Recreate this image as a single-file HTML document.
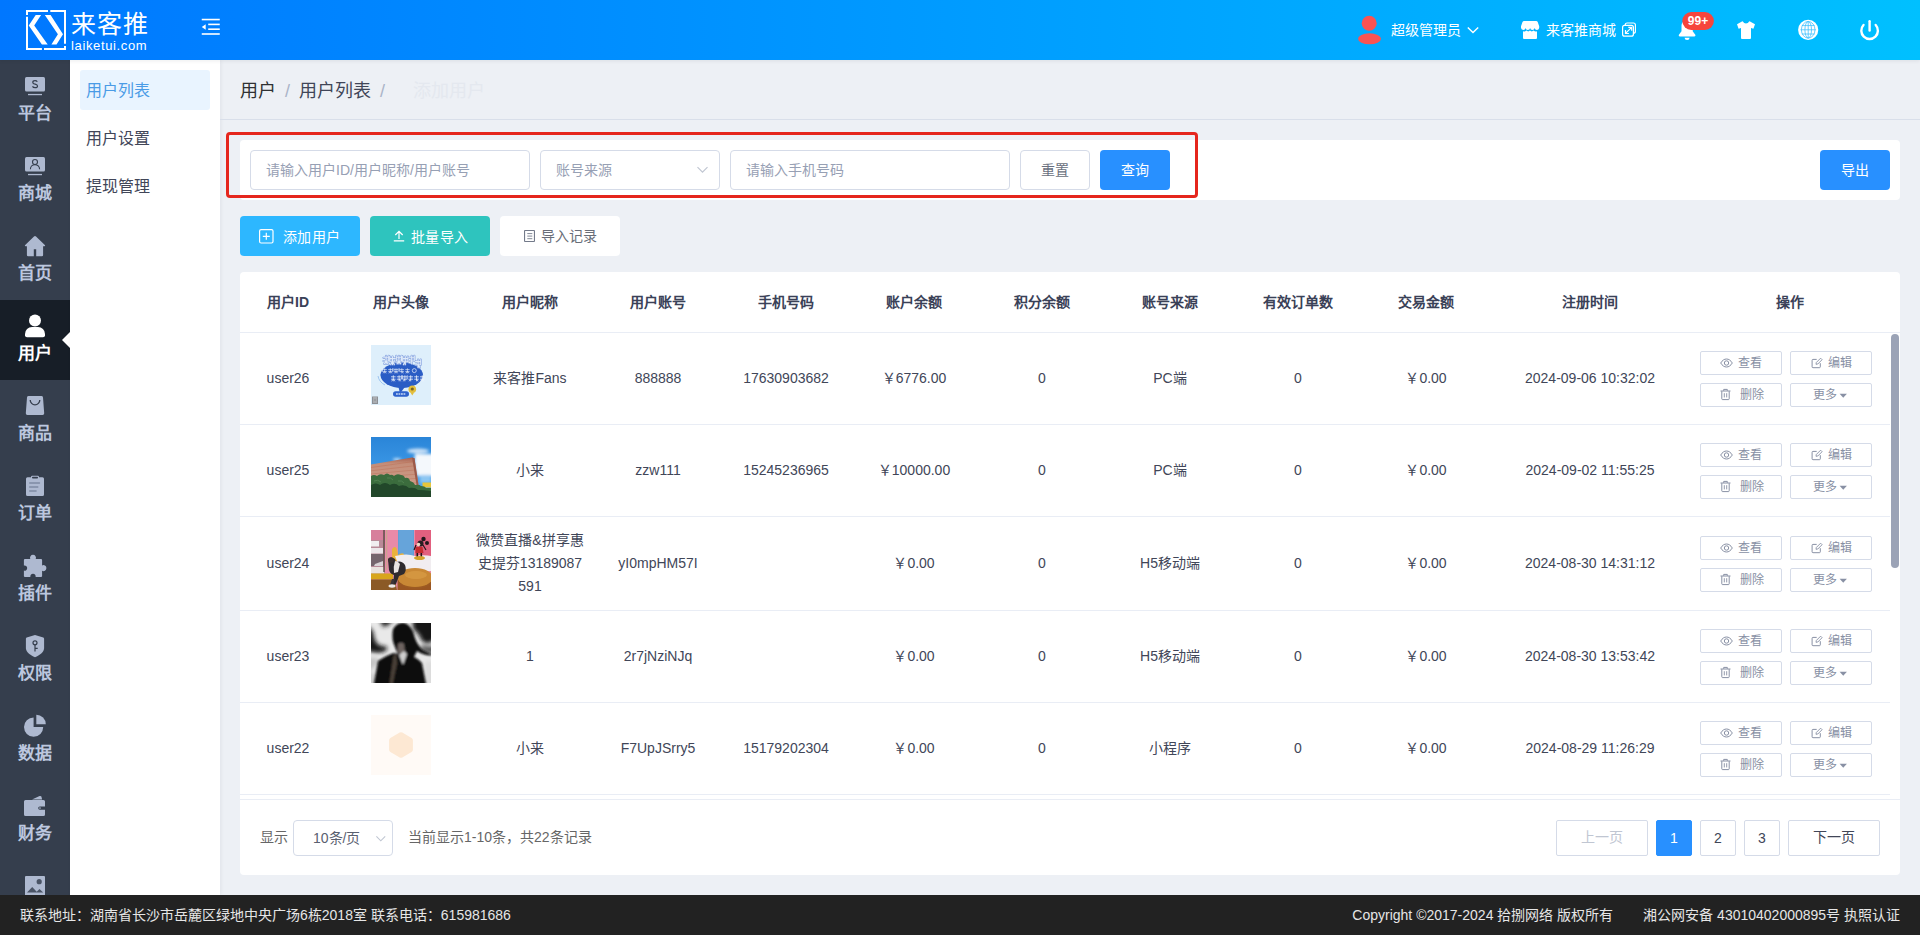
<!DOCTYPE html>
<html lang="zh-CN">
<head>
<meta charset="utf-8">
<title>用户列表</title>
<style>
*{box-sizing:border-box;margin:0;padding:0}
html,body{width:1920px;height:935px;overflow:hidden}
body{font-family:"Liberation Sans",sans-serif;font-size:14px;color:#414658;background:#edf0f5;position:relative}
.abs{position:absolute}
/* header */
#hd{position:absolute;left:0;top:0;width:1920px;height:60px;background:linear-gradient(90deg,#0077ff 0%,#00c0ff 100%);box-shadow:0 1px 4px rgba(0,21,41,.08);z-index:5}
#hd .t{position:absolute;color:#fff;font-size:14px;line-height:20px;white-space:nowrap}
/* sidebar */
#sb{position:absolute;left:0;top:60px;width:70px;height:835px;background:#353e4d;overflow:hidden}
.mi{position:absolute;left:0;width:70px;height:80px}
.mi svg{position:absolute;left:0;top:0}
.mi span{position:absolute;left:0;top:43px;width:70px;text-align:center;font-size:17px;line-height:22px;font-weight:bold;color:#bcc7df}
.mi.on{background:#171e27}
.mi.on span{color:#fff}
/* submenu */
#sm{position:absolute;left:70px;top:60px;width:150px;height:835px;background:#fff;box-shadow:1px 0 4px rgba(0,21,41,.06)}
#sm div{position:absolute;left:10px;width:130px;height:40px;line-height:42px;padding-left:6px;font-size:16px;color:#414658;border-radius:3px}
#sm div.on{background:#e9f4ff;color:#4a9be6}

/* main */
#bc{position:absolute;left:220px;top:60px;width:1700px;height:60px;border-bottom:1px solid #d9dfea}
#bc span{position:absolute;top:19px;font-size:18px;line-height:24px;white-space:nowrap}
.pn{position:absolute;background:#fff;border-radius:4px}
.ip{position:absolute;top:150px;height:40px;border:1px solid #d5dbe8;border-radius:4px;background:#fff;line-height:38px;padding-left:15px;font-size:14px;color:#97a0b4;white-space:nowrap}
.bt{position:absolute;height:40px;border-radius:4px;line-height:40px;text-align:center;font-size:14px;color:#fff;white-space:nowrap}

/* table */
#tb .hl{position:absolute;left:0;height:1px;background:#e9edf5}
.th,.td{position:absolute;display:flex;align-items:center;justify-content:center;text-align:center;white-space:nowrap}
.th{top:-1px;height:60px;font-weight:bold;font-size:14px;color:#3a4157}
.td{font-size:14px;line-height:23px;color:#414658}
.av{position:absolute;left:131px;width:60px;height:60px;overflow:hidden}
.av svg{display:block}
.ob{position:absolute;width:82px;height:24px;border:1px solid #d5dbe8;border-radius:2px;background:#fff;font-size:12px;line-height:22px;color:#8890a4;white-space:nowrap}
.ob span{position:absolute;top:0}
.ob svg{position:absolute}
.pg{position:absolute;top:548px;height:36px;border:1px solid #d5dbe8;border-radius:2px;background:#fff;text-align:center;line-height:34px;font-size:14px;color:#414658}
/* footer */
#ft{position:absolute;left:0;top:895px;width:1920px;height:40px;background:#222;color:#e6e6e6;font-size:14px;line-height:40px;white-space:nowrap}
</style>
</head>
<body>
<div id="hd">
  <svg class="abs" style="left:0;top:0" width="240" height="60" viewBox="0 0 240 60">
    <g fill="none" stroke="#fff" stroke-width="2">
      <path d="M27 15V11H48 M50.3 11H65V43.7 M65 46V49H44 M41.9 49H27V16.8"/>
    </g>
    <polygon fill="#fff" points="35.7,15 41.1,15 34.2,25.5 47.7,44.5 41.9,44.5 28.75,25.5"/>
    <polygon fill="#fff" points="44.8,15 50.6,15 63,34.3 56.5,44.5 51.4,44.5 57.9,34.3"/>
    <g fill="#fff">
      <rect x="201.75" y="18.75" width="18" height="1.6"/>
      <rect x="208.2" y="23.6" width="11.55" height="1.6"/>
      <rect x="208.2" y="28.4" width="11.55" height="1.6"/>
      <rect x="201.75" y="33.2" width="18" height="1.6"/>
      <polygon points="201.75,27 205.7,24.2 205.7,29.8"/>
    </g>
  </svg>
  <div class="t" style="left:71px;top:9px;font-size:25px;line-height:30px;font-weight:300;letter-spacing:.8px">来客推</div>
  <div class="t" style="left:71px;top:38px;font-size:13px;line-height:16px;letter-spacing:.63px">laiketui.com</div>
  <svg class="abs" style="left:1350px;top:0" width="570" height="60" viewBox="1350 0 570 60">
    <!-- admin avatar -->
    <circle cx="1369.2" cy="23.3" r="7.5" fill="#f95353"/>
    <ellipse cx="1369.5" cy="38.8" rx="11.5" ry="5.5" fill="#f95353"/>
    <path d="M1467.8 27.4l5.2 5.2 5.2-5.2" fill="none" stroke="#fff" stroke-width="1.4"/>
    <!-- shop -->
    <path fill="#fff" d="M1524 21h12.2q1 0 1.5 1l1.5 4.2v1.6a2.3 2.3 0 0 1-4.55 .3a2.3 2.3 0 0 1-4.55 0a2.3 2.3 0 0 1-4.55 0a2.3 2.3 0 0 1-4.55-.3v-1.6l1.5-4.2q.5-1 1.55-1z"/>
    <path fill="#fff" d="M1523 31.2q1.6 .9 3.4-.6q1.8 1.6 3.6 0q1.8 1.6 3.6 0q1.8 1.5 3.4 .6v6.8q0 1-1 1h-12q-1 0-1-1z"/>
    <!-- external link -->
    <g fill="none" stroke="#fff" stroke-width="1.2">
      <rect x="1622.6" y="25.4" width="10.8" height="10.8" rx="2"/>
      <path d="M1625.2 25.4v-0.4a2 2 0 0 1 2-2h6.2a2 2 0 0 1 2 2v6.2a2 2 0 0 1-2 2h-.2"/>
      <path d="M1625.6 33.4l6-6M1628.3 27.3h3.4v3.4M1625.5 30.1v3.400h3.4"/>
    </g>
    <!-- bell -->
    <path fill="#fff" d="M1687.1 20.2c-3.6 0-5.6 2.6-5.6 5.8v5.2l-2.6 3.6c-.4.8 0 1.7 1 1.7h14.4c1 0 1.4-.9 1-1.7l-2.6-3.6V26c0-3.2-2-5.8-5.6-5.800z"/>
    <path fill="#fff" d="M1684.6 37.7h5a2.5 2.3 0 0 1-5 0z"/>
    <rect x="1682.3" y="12" width="31.6" height="18" rx="9" fill="#f6453c"/>
    <!-- shirt -->
    <path fill="#fff" d="M1742.4 21.200l-5.4 3 1.600 4.600 2.400-.9v10.100q0 1 1 1h8q1 0 1-1v-10.100l2.400.9 1.600-4.600-5.400-3q-.5 0-.7.500a3 2.300 0 0 1-5.800 0q-.2-.5-.7-.5z"/>
    <!-- globe -->
    <circle cx="1808.200" cy="29.800" r="10.100" fill="#fff"/>
    <g fill="none" stroke="#3fc0ff" stroke-width=".8">
      <ellipse cx="1808.200" cy="29.800" rx="3.300" ry="8.300"/>
      <ellipse cx="1808.200" cy="29.800" rx="6.800" ry="8.300"/>
      <path d="M1808.200 21.500v16.600M1800.500 29.800h15.400M1801.800 25.600h12.800M1801.800 34h12.800"/>
    </g>
    <!-- power -->
    <g fill="none" stroke="#fff" stroke-width="2.400" stroke-linecap="round">
      <path d="M1869.600 21.200v9.300"/>
      <path d="M1863.500 25a8.300 8.300 0 1 0 12.200 0"/>
    </g>
  </svg>
  <div class="t" style="left:1391px;top:20px">超级管理员</div>
  <div class="t" style="left:1546px;top:20px">来客推商城</div>
  <div class="t" style="left:1682px;top:12px;width:32px;text-align:center;font-size:12px;line-height:18px;font-weight:bold">99+</div>
</div>
<div id="sb">
  <div class="mi" style="top:0"><svg width="70" height="80"><rect x="25" y="17" width="20" height="14.5" rx="1.5" fill="#aeb9d0"/><rect x="28" y="33.900" width="14" height="1.300" fill="#aeb9d0"/><path d="M37.300 21.800c-.5-.8-1.300-1.100-2.300-1.100-1.300 0-2.200.6-2.200 1.700 0 2.400 4.700 1 4.700 3.500 0 1.100-1 1.800-2.400 1.800-1.100 0-2.100-.4-2.600-1.300" fill="none" stroke="#353e4d" stroke-width="1.200"/></svg><span>平台</span></div>
  <div class="mi" style="top:80px"><svg width="70" height="80"><rect x="25" y="17" width="20" height="14.5" rx="1.5" fill="#aeb9d0"/><rect x="28" y="33.900" width="14" height="1.300" fill="#aeb9d0"/><g fill="none" stroke="#353e4d" stroke-width="1.100"><circle cx="35" cy="22" r="2.500"/><path d="M30.400 29.200a4.600 4.600 0 0 1 9.200 0"/></g></svg><span>商城</span></div>
  <div class="mi" style="top:160px"><svg width="70" height="80"><path fill="#aeb9d0" d="M34 16.400q1-.9 2 0l8.800 8.600q.9 1-.4 1.300h-1.300v8.700q0 1.200-1.200 1.200h-5.700v-7h-2.400v7h-5.700q-1.200 0-1.200-1.200v-8.700h-1.300q-1.300-.3-.4-1.300z"/></svg><span>首页</span></div>
  <div class="mi on" style="top:240px"><svg width="70" height="80"><circle cx="35" cy="20.500" r="6" fill="#fff"/><path fill="#fff" d="M25 35.200v-1.200a7 7 0 0 1 7-7h6a7 7 0 0 1 7 7v1.200q0 2-2 2h-16q-2 0-2-2z"/><polygon points="70,32 62,40 70,48" fill="#fff"/></svg><span>用户</span></div>
  <div class="mi" style="top:320px"><svg width="70" height="80"><path fill="#aeb9d0" d="M28.600 16h12.800q1.400 0 1.600 1.400l1.200 15.900q.1 1.700-1.600 1.700h-15.200q-1.700 0-1.600-1.700l1.200-15.900q.2-1.400 1.600-1.400z"/><path d="M30.200 20a4.800 4.800 0 0 0 9.600 0" fill="none" stroke="#353e4d" stroke-width="1.300"/></svg><span>商品</span></div>
  <div class="mi" style="top:400px"><svg width="70" height="80"><path fill="#aeb9d0" d="M27.500 17.300h3.500v-.2q0-1.300 1.300-1.300h5.400q1.300 0 1.300 1.300v.2h3.500q1.500 0 1.500 1.500v15.700q0 1.500-1.500 1.500h-15q-1.500 0-1.500-1.500v-15.700q0-1.500 1.500-1.500z"/><rect x="32" y="16.800" width="6" height="1.700" rx=".8" fill="#353e4d"/><g fill="#7f8aa3"><rect x="29" y="22.300" width="11.200" height="1.500" rx=".7"/><rect x="29" y="26.300" width="9.500" height="1.500" rx=".7"/><rect x="29" y="30.300" width="7.800" height="1.500" rx=".7"/></g></svg><span>订单</span></div>
  <div class="mi" style="top:480px"><svg width="70" height="80"><path fill="#aeb9d0" d="M25 19.100h5.300a3 3 0 1 1 5.400 0h5.300q1.100 0 1.100 1.100v5.200a3 3 0 1 1 0 5.400v5.200q0 1.100-1.100 1.100h-5.400a2.700 2.700 0 1 0-5.200 0h-5.400q-1.100 0-1.100-1.100v-5.400a2.600 2.600 0 1 0 0-5v-5.400q0-1.100 1.100-1.100z"/></svg><span>插件</span></div>
  <div class="mi" style="top:560px"><svg width="70" height="80"><path fill="#aeb9d0" d="M35 15l8.300 2.600q.8.300.8 1.100v9.300c0 4.400-4.500 7.300-9.100 9.200-4.600-1.900-9.100-4.800-9.100-9.200v-9.300q0-.8.800-1.100z"/><g fill="none" stroke="#353e4d" stroke-width="1.200"><circle cx="35" cy="22.800" r="2"/><path d="M35 24.800v6.600M35 28.300h2.700"/></g></svg><span>权限</span></div>
  <div class="mi" style="top:640px"><svg width="70" height="80"><path fill="#aeb9d0" d="M33.600 17.500v9.600h9.600a9.600 9.600 0 1 1-9.600-9.600z"/><path fill="#aeb9d0" d="M36.300 14.800a9.500 9.500 0 0 1 9.500 9.500h-9.500z"/></svg><span>数据</span></div>
  <div class="mi" style="top:720px"><svg width="70" height="80"><path fill="#aeb9d0" d="M32 19.600l7.600-3.600q1.200-.4 1.800.5l.7 3.100z"/><path fill="#aeb9d0" d="M25.500 20h18q1.500 0 1.500 1.500v5h-5.200a1.600 1.600 0 0 0 0 3.200h5.200v4.800q0 1.500-1.500 1.500h-18q-1.500 0-1.500-1.500v-13q0-1.500 1.500-1.500z"/><circle cx="40" cy="28.100" r=".8" fill="#aeb9d0"/></svg><span>财务</span></div>
  <div class="mi" style="top:800px"><svg width="70" height="80"><rect x="25" y="16" width="20" height="20" rx="1" fill="#aeb9d0"/><circle cx="39.200" cy="21.700" r="2.600" fill="#4a5466"/><path fill="#4a5466" d="M27 32.600l5.200-5.600 4.500 4.800 2.800-2.800 3.700 3.600z"/></svg></div>
</div>
<div id="sm">
  <div class="on" style="top:10px">用户列表</div>
  <div style="top:58px">用户设置</div>
  <div style="top:106px">提现管理</div>
</div>
<div id="main">
  <div id="bc">
    <span style="left:20px;color:#303133">用户</span>
    <span style="left:65px;color:#aab4c8">/</span>
    <span style="left:79px;color:#414658">用户列表</span>
    <span style="left:160px;color:#aab4c8">/</span>
    <span style="left:193px;color:#e4e8ef">添加用户</span>
  </div>
  <!-- search panel -->
  <div class="pn" style="left:240px;top:140px;width:1660px;height:60px"></div>
  <div class="ip" style="left:250px;width:280px">请输入用户ID/用户昵称/用户账号</div>
  <div class="ip" style="left:540px;width:180px">账号来源<svg class="abs" style="left:155px;top:14px" width="14" height="10"><path d="M1.500 2.200l5 5 5-5" fill="none" stroke="#c0c6d2" stroke-width="1.200"/></svg></div>
  <div class="ip" style="left:730px;width:280px">请输入手机号码</div>
  <div class="bt" style="left:1020px;top:150px;width:70px;border:1px solid #d5dbe8;background:#fff;color:#6a7180;line-height:38px">重置</div>
  <div class="bt" style="left:1100px;top:150px;width:70px;background:#2890ff">查询</div>
  <div class="bt" style="left:1820px;top:150px;width:70px;background:#2890ff">导出</div>
  <div class="abs" style="left:226px;top:132px;width:972px;height:66px;border:3px solid #e5261d;border-radius:4px"></div>
  <!-- action buttons -->
  <div class="bt" style="left:240px;top:216px;width:120px;background:#2db7ff;text-align:left;padding-left:43px;line-height:42px;letter-spacing:.4px"><svg class="abs" style="left:19px;top:13px" width="15" height="15"><rect x=".6" y=".6" width="13.400" height="13.400" rx="1.500" fill="none" stroke="#fff" stroke-width="1.200"/><path d="M7.300 3.800v7M3.800 7.300h7" stroke="#fff" stroke-width="1.200"/></svg>添加用户</div>
  <div class="bt" style="left:370px;top:216px;width:120px;background:#2ec4be;text-align:left;padding-left:41px;line-height:42px;letter-spacing:.4px"><svg class="abs" style="left:23px;top:14px" width="12" height="12"><path d="M.8 10.800h10.400M6 9V1.400M2.300 5l3.700-3.700 3.700 3.700" fill="none" stroke="#fff" stroke-width="1.200"/></svg>批量导入</div>
  <div class="bt" style="left:500px;top:216px;width:120px;background:#fff;color:#686d78;text-align:left;padding-left:41px"><svg class="abs" style="left:24px;top:14px" width="12" height="13"><rect x=".55" y=".55" width="9.900" height="10.900" rx=".4" fill="none" stroke="#737a8a" stroke-width="1.100"/><path d="M3.300 3.600h5M3.300 6.100h5M3.300 8.700h5" stroke="#737a8a" stroke-width=".9"/></svg>导入记录</div>
  <!-- table panel -->
  <div class="pn" id="tb" style="left:240px;top:272px;width:1660px;height:603px">
<div class="th" style="left:0px;width:96px">用户ID</div>
<div class="th" style="left:96px;width:130px">用户头像</div>
<div class="th" style="left:226px;width:128px">用户昵称</div>
<div class="th" style="left:354px;width:128px">用户账号</div>
<div class="th" style="left:482px;width:128px">手机号码</div>
<div class="th" style="left:610px;width:128px">账户余额</div>
<div class="th" style="left:738px;width:128px">积分余额</div>
<div class="th" style="left:866px;width:128px">账号来源</div>
<div class="th" style="left:994px;width:128px">有效订单数</div>
<div class="th" style="left:1122px;width:128px">交易金额</div>
<div class="th" style="left:1250px;width:200px">注册时间</div>
<div class="th" style="left:1450px;width:200px">操作</div>
<div class="hl" style="top:60px;width:1660px"></div>
<div class="hl" style="top:152px;width:1650px"></div>
<div class="hl" style="top:244px;width:1650px"></div>
<div class="hl" style="top:338px;width:1650px"></div>
<div class="hl" style="top:430px;width:1650px"></div>
<div class="hl" style="top:522px;width:1650px"></div>
<div class="hl" style="top:527px;width:1660px"></div>
<div class="td" style="left:0px;top:61px;width:96px;height:91px">user26</div>
<div class="td" style="left:226px;top:61px;width:128px;height:91px">来客推Fans</div>
<div class="td" style="left:354px;top:61px;width:128px;height:91px">888888</div>
<div class="td" style="left:482px;top:61px;width:128px;height:91px">17630903682</div>
<div class="td" style="left:610px;top:61px;width:128px;height:91px">￥6776.00</div>
<div class="td" style="left:738px;top:61px;width:128px;height:91px">0</div>
<div class="td" style="left:866px;top:61px;width:128px;height:91px">PC端</div>
<div class="td" style="left:994px;top:61px;width:128px;height:91px">0</div>
<div class="td" style="left:1122px;top:61px;width:128px;height:91px">￥0.00</div>
<div class="td" style="left:1250px;top:61px;width:200px;height:91px">2024-09-06 10:32:02</div>
<div class="av" id="av1" style="top:73px"><svg width="60" height="60" viewBox="0 0 60 60"><defs><filter id="b1"><feGaussianBlur stdDeviation=".4"/></filter></defs><rect width="60" height="60" fill="#deeffb"/><g filter="url(#b1)"><path d="M7 31q1 6 7 9M9.500 29q.5 4 4 7" fill="none" stroke="#9cc4f0" stroke-width="1"/><ellipse cx="30.800" cy="30.200" rx="21.200" ry="12.700" fill="#2c5cc5"/><path d="M27 40l2 8.500 6-8z" fill="#2c5cc5"/><path d="M12.5 12.8h5.2M12.5 16.0h5.2M15.1 10.8v8.0M13.3 18.8l1.6 -2.8M16.9 18.8l-1.6 -2.8M17.7 10.8v5.2M18.9 13.6h5.2M18.9 16.8h5.2M21.5 11.6v8.0M19.7 19.6l1.6 -2.8M23.3 19.6l-1.6 -2.8M18.9 11.6v5.2M25.3 12.8h5.2M25.3 16.0h5.2M27.9 10.8v8.0M26.1 18.8l1.6 -2.8M29.7 18.8l-1.6 -2.8M25.3 10.8v5.2M30.5 10.8v5.2M31.7 13.6h5.2M31.7 16.8h5.2M34.3 11.6v8.0M32.5 19.6l1.6 -2.8M31.7 11.6v5.2M36.9 11.6v5.2M38.1 12.8h5.2M38.1 16.0h5.2M40.7 10.8v8.0M43.3 10.8v5.2M44.5 16.6h5.2M44.5 19.8h5.2M47.1 14.6v8.0M48.9 22.6l-1.6 -2.8M49.7 14.6v5.2" fill="none" stroke="#6f8fd8" stroke-width="2.200" stroke-linecap="round" opacity=".85"/><path d="M12.5 12.8h5.2M12.5 16.0h5.2M15.1 10.8v8.0M13.3 18.8l1.6 -2.8M16.9 18.8l-1.6 -2.8M17.7 10.8v5.2M18.9 13.6h5.2M18.9 16.8h5.2M21.5 11.6v8.0M19.7 19.6l1.6 -2.8M23.3 19.6l-1.6 -2.8M18.9 11.6v5.2M25.3 12.8h5.2M25.3 16.0h5.2M27.9 10.8v8.0M26.1 18.8l1.6 -2.8M29.7 18.8l-1.6 -2.8M25.3 10.8v5.2M30.5 10.8v5.2M31.7 13.6h5.2M31.7 16.8h5.2M34.3 11.6v8.0M32.5 19.6l1.6 -2.8M31.7 11.6v5.2M36.9 11.6v5.2M38.1 12.8h5.2M38.1 16.0h5.2M40.7 10.8v8.0M43.3 10.8v5.2M44.5 16.6h5.2M44.5 19.8h5.2M47.1 14.6v8.0M48.9 22.6l-1.6 -2.8M49.7 14.6v5.2" fill="none" stroke="#dfeaf9" stroke-width="1.100" stroke-linecap="round"/><path d="M11.5 24.6h4.3M11.5 26.6h4.3M13.7 23.3v5.0M12.1 28.3l1.3 -1.8M15.2 28.3l-1.3 -1.8M11.5 23.3v3.2M17.2 24.6h4.3M17.2 26.6h4.3M19.3 23.3v5.0M17.8 28.3l1.3 -1.8M20.9 28.3l-1.3 -1.8M21.5 23.3v3.2M22.9 24.6h4.3M22.9 26.6h4.3M25.0 23.3v5.0M23.5 28.3l1.3 -1.8M26.6 28.3l-1.3 -1.8M22.9 23.3v3.2M27.2 23.3v3.2M28.6 24.6h4.3M28.6 26.6h4.3M30.8 23.3v5.0M32.3 28.3l-1.3 -1.8M28.6 23.3v3.2M34.3 24.6h4.3M34.3 26.6h4.3M36.4 23.3v5.0M34.9 28.3l1.3 -1.8M38.0 28.3l-1.3 -1.8" fill="none" stroke="#e8effb" stroke-width=".8" opacity=".8"/><circle cx="43.300" cy="25.600" r="2" fill="none" stroke="#e6eefb" stroke-width=".7"/><path d="M20.0 31.8h4.6M20.0 34.2h4.6M22.3 30.3v6.0M20.7 36.3l1.4 -2.1M23.9 36.3l-1.4 -2.1M25.8 31.8h4.6M25.8 34.2h4.6M28.1 30.3v6.0M29.7 36.3l-1.4 -2.1M30.4 30.3v3.9M31.6 31.8h4.6M31.6 34.2h4.6M33.9 30.3v6.0M32.3 36.3l1.4 -2.1M31.6 30.3v3.9M36.2 30.3v3.9M37.4 31.8h4.6M37.4 34.2h4.6M39.7 30.3v6.0M38.1 36.3l1.4 -2.1M43.2 31.8h4.6M43.2 34.2h4.6M45.5 30.3v6.0M47.1 36.3l-1.4 -2.1M49.0 31.8h4.6M49.0 34.2h4.6M51.3 30.3v6.0M49.7 36.3l1.4 -2.1M52.9 36.3l-1.4 -2.1" fill="none" stroke="#eef3fc" stroke-width=".9" opacity=".85"/><rect x="22" y="46.300" width="16" height="5.400" rx="2.700" fill="#2f62cc"/><path d="M25 49h10" stroke="#c9d9f5" stroke-width="1.400" stroke-dasharray="1.800 .7"/><circle cx="41.300" cy="44.300" r="3.800" fill="#e3bd3a"/><path d="M39.500 47.500l1.800 3 1.800-3z" fill="#e3bd3a"/><circle cx="41.300" cy="44" r="1.600" fill="#7a6420"/><rect x="1" y="51.500" width="6" height="7.500" fill="#8d8f94"/><path d="M2 53h4M2 55h1.500M4.500 55H6M2 57h4" stroke="#d8dade" stroke-width=".8"/></g></svg></div>
<div class="ob" style="left:1460px;top:79px"><svg style="left:19px;top:5px" width="13" height="12"><path d="M.7 6C2.300 3.300 4.300 2 6.500 2s4.200 1.300 5.800 4c-1.600 2.700-3.600 4-5.800 4S2.300 8.700.7 6z" fill="none" stroke="#8890a4" stroke-width="1"/><circle cx="6.500" cy="6" r="2.200" fill="none" stroke="#8890a4" stroke-width="1"/></svg><span style="left:37px">查看</span></div>
<div class="ob" style="left:1550px;top:79px"><svg style="left:20px;top:5px" width="12" height="12"><path d="M9.300 6.200v3.600q0 .9-.9.900H2q-.9 0-.9-.9V3.300q0-.9.9-.9h3.700" fill="none" stroke="#8890a4" stroke-width="1"/><path d="M5 7.300l.3-1.800 4.300-4.300 1.500 1.500-4.300 4.300z" fill="none" stroke="#8890a4" stroke-width=".9"/></svg><span style="left:37px">编辑</span></div>
<div class="ob" style="left:1460px;top:111px"><svg style="left:19px;top:4px" width="11" height="13"><path d="M.5 3h10M3.700 2.800V1.400h3.600v1.400M1.800 3.200v7.600q0 .8.800.8h5.800q.8 0 .8-.8V3.200" fill="none" stroke="#8890a4" stroke-width="1"/><path d="M4.300 5.200v4.200M6.700 5.200v4.200" stroke="#8890a4" stroke-width=".9"/></svg><span style="left:39px">删除</span></div>
<div class="ob" style="left:1550px;top:111px"><span style="left:22px">更多</span><svg style="left:48px;top:9px" width="9" height="6"><path d="M.6.800h7.300l-3.650 4z" fill="#8890a4"/></svg></div>
<div class="td" style="left:0px;top:153px;width:96px;height:91px">user25</div>
<div class="td" style="left:226px;top:153px;width:128px;height:91px">小来</div>
<div class="td" style="left:354px;top:153px;width:128px;height:91px">zzw111</div>
<div class="td" style="left:482px;top:153px;width:128px;height:91px">15245236965</div>
<div class="td" style="left:610px;top:153px;width:128px;height:91px">￥10000.00</div>
<div class="td" style="left:738px;top:153px;width:128px;height:91px">0</div>
<div class="td" style="left:866px;top:153px;width:128px;height:91px">PC端</div>
<div class="td" style="left:994px;top:153px;width:128px;height:91px">0</div>
<div class="td" style="left:1122px;top:153px;width:128px;height:91px">￥0.00</div>
<div class="td" style="left:1250px;top:153px;width:200px;height:91px">2024-09-02 11:55:25</div>
<div class="av" id="av2" style="top:165px"><svg width="60" height="60" viewBox="0 0 60 60"><defs><linearGradient id="sk" x1="0" y1="0" x2="0" y2="1"><stop offset="0" stop-color="#2a85d8"/><stop offset=".55" stop-color="#3c98e6"/><stop offset="1" stop-color="#5fb0ee"/></linearGradient><linearGradient id="bd" x1="0" y1="0" x2="0" y2="1"><stop offset="0" stop-color="#a8604e"/><stop offset=".2" stop-color="#c48d78"/><stop offset="1" stop-color="#d0a08c"/></linearGradient><filter id="b2"><feGaussianBlur stdDeviation=".7"/></filter><filter id="b2b"><feGaussianBlur stdDeviation="1.600"/></filter></defs><rect width="60" height="60" fill="url(#sk)"/><g filter="url(#b2b)"><path d="M44 17h20v22h-18q-4-10-2-22z" fill="#f4f8fc"/><ellipse cx="47" cy="14" rx="11" ry="2.600" fill="#dbeaf8" opacity=".9"/><ellipse cx="26" cy="22.500" rx="4" ry="1.300" fill="#fff" opacity=".8"/><rect x="49" y="38" width="11" height="8" fill="#8cc6f2"/></g><g filter="url(#b2)"><path d="M0 27.500L41 20.500l2.500.8L48 51H0z" fill="url(#bd)"/><path d="M0 30.500l43-6M0 33.800l43.500-5M0 37l44-4M0 40.300l44.500-3M0 43.500l45-2M0 46.800l46-1" stroke="#b9694f" stroke-width=".7" opacity=".55"/><path d="M41 20.500l2.500.8L48 51h-2z" fill="#9c5a4a"/><rect x="51.500" y="45.500" width="8.500" height="5" fill="#e8c63a"/><path d="M0 39q3-2 6 0 3-3 7-1 3-3 6 0 2-1 4 1 3-3 7-1 3 0 4 3 4-1 5 3 4 1 5 4 4-1 6 1 4 0 5 2l5 0V60H0z" fill="#3a6c3e"/><path d="M0 48q5-3 9 0 5-4 10 0 5-3 9 1 6-2 10 2 6-1 9 2 6 0 13 1V60H0z" fill="#20472a"/><path d="M3 44q4-2 7 1M16 41q4-1 6 2M27 44q4-1 6 2" stroke="#5a8a58" stroke-width="1" fill="none" opacity=".7"/></g></svg></div>
<div class="ob" style="left:1460px;top:171px"><svg style="left:19px;top:5px" width="13" height="12"><path d="M.7 6C2.300 3.300 4.300 2 6.500 2s4.200 1.300 5.800 4c-1.600 2.700-3.600 4-5.800 4S2.300 8.700.7 6z" fill="none" stroke="#8890a4" stroke-width="1"/><circle cx="6.500" cy="6" r="2.200" fill="none" stroke="#8890a4" stroke-width="1"/></svg><span style="left:37px">查看</span></div>
<div class="ob" style="left:1550px;top:171px"><svg style="left:20px;top:5px" width="12" height="12"><path d="M9.300 6.200v3.600q0 .9-.9.900H2q-.9 0-.9-.9V3.300q0-.9.9-.9h3.700" fill="none" stroke="#8890a4" stroke-width="1"/><path d="M5 7.300l.3-1.800 4.300-4.300 1.500 1.500-4.300 4.300z" fill="none" stroke="#8890a4" stroke-width=".9"/></svg><span style="left:37px">编辑</span></div>
<div class="ob" style="left:1460px;top:203px"><svg style="left:19px;top:4px" width="11" height="13"><path d="M.5 3h10M3.700 2.800V1.400h3.600v1.400M1.800 3.200v7.600q0 .8.800.8h5.800q.8 0 .8-.8V3.200" fill="none" stroke="#8890a4" stroke-width="1"/><path d="M4.300 5.200v4.200M6.700 5.200v4.200" stroke="#8890a4" stroke-width=".9"/></svg><span style="left:39px">删除</span></div>
<div class="ob" style="left:1550px;top:203px"><span style="left:22px">更多</span><svg style="left:48px;top:9px" width="9" height="6"><path d="M.6.800h7.300l-3.650 4z" fill="#8890a4"/></svg></div>
<div class="td" style="left:0px;top:245px;width:96px;height:93px">user24</div>
<div class="td" style="left:226px;top:245px;width:128px;height:93px">微赞直播&amp;拼享惠<br>史提芬13189087<br>591</div>
<div class="td" style="left:354px;top:245px;width:128px;height:93px">yI0mpHM57I</div>
<div class="td" style="left:610px;top:245px;width:128px;height:93px">￥0.00</div>
<div class="td" style="left:738px;top:245px;width:128px;height:93px">0</div>
<div class="td" style="left:866px;top:245px;width:128px;height:93px">H5移动端</div>
<div class="td" style="left:994px;top:245px;width:128px;height:93px">0</div>
<div class="td" style="left:1122px;top:245px;width:128px;height:93px">￥0.00</div>
<div class="td" style="left:1250px;top:245px;width:200px;height:93px">2024-08-30 14:31:12</div>
<div class="av" id="av3" style="top:258px"><svg width="60" height="60" viewBox="0 0 60 60"><defs><filter id="b3" x="-20%" y="-20%" width="140%" height="140%"><feGaussianBlur stdDeviation=".75"/></filter></defs><rect width="60" height="60" fill="#e88aa8"/><g filter="url(#b3)"><rect x="-5" y="-5" width="19" height="49" fill="#b98a98"/><rect x="-5" y="-5" width="18" height="15" fill="#d77f9c"/><rect x="-5" y="11" width="13" height="5.500" fill="#f1edf0"/><rect x="-5" y="18" width="17" height="5.500" fill="#ece6ea"/><rect x="-5" y="24" width="17.500" height="12" fill="#75656d"/><path d="M4 34l8-3v5H3z" fill="#d9d2d6"/><rect x="-5" y="37" width="18" height="6.500" fill="#e9e2de"/><rect x="12.300" y="-5" width="1.400" height="47" fill="#5d4a45"/><rect x="15" y="-5" width="1.200" height="45" fill="#c9a58e"/><rect x="27" y="-5" width="16" height="32" fill="#5f9fd8"/><path d="M28 0l14 0v26h-14z" fill="#6aa8dc" opacity=".6"/><rect x="44" y="-5" width="21" height="35" fill="#e2617f"/><path d="M21 19q3-4 5 0l1 6q4-3 6-1-1 5-6 5l-2 3h-4z" fill="#e9b23a"/><path d="M24 26q12-3 20 0 8-2 21 1v14H30z" fill="#f1edf0"/><circle cx="52.500" cy="9" r="2.200" fill="#23181b"/><circle cx="56" cy="13" r="2" fill="#23181b"/><circle cx="49.500" cy="13.500" r="3" fill="#2a1d20"/><circle cx="47.500" cy="14.500" r="1.800" fill="#f0d6c4"/><path d="M44.500 17h7l1 6h-8z" fill="#c42b2f"/><path d="M45 15l-2 5M52 15l3 5" stroke="#23181b" stroke-width="1.200"/><rect x="45.500" y="23" width="1.600" height="4" fill="#23181b"/><rect x="49.500" y="23" width="1.600" height="4" fill="#23181b"/><ellipse cx="48.500" cy="28" rx="5.500" ry="2" fill="#d3a22b"/><path d="M26.500 48v18h40V44z" fill="#9c5a22"/><ellipse cx="44" cy="47.500" rx="17.500" ry="9.500" fill="#c98834"/><ellipse cx="45" cy="45" rx="11" ry="4" fill="#d79a45" opacity=".8"/><path d="M27 50q4 9 17 9t17-7v14h-34z" fill="#9a5620"/><rect x="-5" y="43.500" width="27" height="6" fill="#d8a51a"/><path d="M-5 49.500h29l3 16H-5z" fill="#8b5a28"/><path d="M17 29q3-3 7 0l1 3q6-2 9 3 2 5-1 9l-5 2-3 8-3 1 1-10q-4-1-5-5z" fill="#2e2a2d"/><path d="M24 31q3 0 5 3l-2 8-4 1q-1-6 1-12z" fill="#e9e4e2"/><circle cx="20" cy="30" r="2.800" fill="#3a2f2d"/><path d="M21 49l-2 6h3l2-6z" fill="#3a3437"/><ellipse cx="21" cy="56" rx="3.500" ry="1.700" fill="#ede9e6"/></g></svg></div>
<div class="ob" style="left:1460px;top:264px"><svg style="left:19px;top:5px" width="13" height="12"><path d="M.7 6C2.300 3.300 4.300 2 6.500 2s4.200 1.300 5.800 4c-1.600 2.700-3.600 4-5.800 4S2.300 8.700.7 6z" fill="none" stroke="#8890a4" stroke-width="1"/><circle cx="6.500" cy="6" r="2.200" fill="none" stroke="#8890a4" stroke-width="1"/></svg><span style="left:37px">查看</span></div>
<div class="ob" style="left:1550px;top:264px"><svg style="left:20px;top:5px" width="12" height="12"><path d="M9.300 6.200v3.600q0 .9-.9.900H2q-.9 0-.9-.9V3.300q0-.9.9-.9h3.700" fill="none" stroke="#8890a4" stroke-width="1"/><path d="M5 7.300l.3-1.800 4.300-4.300 1.500 1.500-4.300 4.300z" fill="none" stroke="#8890a4" stroke-width=".9"/></svg><span style="left:37px">编辑</span></div>
<div class="ob" style="left:1460px;top:296px"><svg style="left:19px;top:4px" width="11" height="13"><path d="M.5 3h10M3.700 2.800V1.400h3.600v1.400M1.800 3.200v7.600q0 .8.800.8h5.800q.8 0 .8-.8V3.200" fill="none" stroke="#8890a4" stroke-width="1"/><path d="M4.300 5.200v4.200M6.700 5.200v4.200" stroke="#8890a4" stroke-width=".9"/></svg><span style="left:39px">删除</span></div>
<div class="ob" style="left:1550px;top:296px"><span style="left:22px">更多</span><svg style="left:48px;top:9px" width="9" height="6"><path d="M.6.800h7.300l-3.650 4z" fill="#8890a4"/></svg></div>
<div class="td" style="left:0px;top:339px;width:96px;height:91px">user23</div>
<div class="td" style="left:226px;top:339px;width:128px;height:91px">1</div>
<div class="td" style="left:354px;top:339px;width:128px;height:91px">2r7jNziNJq</div>
<div class="td" style="left:610px;top:339px;width:128px;height:91px">￥0.00</div>
<div class="td" style="left:738px;top:339px;width:128px;height:91px">0</div>
<div class="td" style="left:866px;top:339px;width:128px;height:91px">H5移动端</div>
<div class="td" style="left:994px;top:339px;width:128px;height:91px">0</div>
<div class="td" style="left:1122px;top:339px;width:128px;height:91px">￥0.00</div>
<div class="td" style="left:1250px;top:339px;width:200px;height:91px">2024-08-30 13:53:42</div>
<div class="av" id="av4" style="top:351px"><svg width="60" height="60" viewBox="0 0 60 60"><defs><filter id="b4" x="-20%" y="-20%" width="140%" height="140%"><feGaussianBlur stdDeviation="1.200"/></filter><filter id="b4b" x="-20%" y="-20%" width="140%" height="140%"><feGaussianBlur stdDeviation="2.300"/></filter></defs><rect width="60" height="60" fill="#e9e9e9"/><g filter="url(#b4b)"><path d="M-5 3q8 2 8 12 4 10 12 8 3 4-3 6-8 2-17-2z" fill="#151515"/><path d="M8 -5h14q-2 8-10 9z" fill="#222"/><path d="M42 -5h23v19q-6 10-14 4-3-8-9-12z" fill="#161616"/><path d="M50 22q6 2 15 1v8q-8 0-15-4z" fill="#555"/><path d="M-5 36q10-4 14 2-4 8-14 10z" fill="#c4c4c4"/><rect x="-5" y="50" width="10" height="15" fill="#cfcfcf"/><rect x="54" y="38" width="11" height="27" fill="#dcdcdc"/></g><g filter="url(#b4)"><path d="M22 6q6-9 14-5 6 4 8 14 3 8 8 12l10 5q-9 1-16-4l-4 8-14-2-4-10q-4-8-2-18z" fill="#0e0e0e"/><path d="M2 66l5-28q9-6 16-8l6 2 8 0q9 2 14 8l5 26z" fill="#0b0b0b"/><path d="M27 21q3-3 6 0l1 8-4 3-3-3z" fill="#6d6460"/><path d="M28 32l4 10 4-11-3-3z" fill="#cfcfcf"/><path d="M22.500 33q1.500-2 3-1l.5 9q-2 8-5 24h-3q2-16 3-22z" fill="#4a4038"/></g></svg></div>
<div class="ob" style="left:1460px;top:357px"><svg style="left:19px;top:5px" width="13" height="12"><path d="M.7 6C2.300 3.300 4.300 2 6.500 2s4.200 1.300 5.800 4c-1.600 2.700-3.600 4-5.800 4S2.300 8.700.7 6z" fill="none" stroke="#8890a4" stroke-width="1"/><circle cx="6.500" cy="6" r="2.200" fill="none" stroke="#8890a4" stroke-width="1"/></svg><span style="left:37px">查看</span></div>
<div class="ob" style="left:1550px;top:357px"><svg style="left:20px;top:5px" width="12" height="12"><path d="M9.300 6.200v3.600q0 .9-.9.900H2q-.9 0-.9-.9V3.300q0-.9.9-.9h3.700" fill="none" stroke="#8890a4" stroke-width="1"/><path d="M5 7.300l.3-1.800 4.300-4.300 1.500 1.500-4.300 4.300z" fill="none" stroke="#8890a4" stroke-width=".9"/></svg><span style="left:37px">编辑</span></div>
<div class="ob" style="left:1460px;top:389px"><svg style="left:19px;top:4px" width="11" height="13"><path d="M.5 3h10M3.700 2.800V1.400h3.600v1.400M1.800 3.200v7.600q0 .8.800.8h5.800q.8 0 .8-.8V3.200" fill="none" stroke="#8890a4" stroke-width="1"/><path d="M4.300 5.200v4.200M6.700 5.200v4.200" stroke="#8890a4" stroke-width=".9"/></svg><span style="left:39px">删除</span></div>
<div class="ob" style="left:1550px;top:389px"><span style="left:22px">更多</span><svg style="left:48px;top:9px" width="9" height="6"><path d="M.6.800h7.300l-3.650 4z" fill="#8890a4"/></svg></div>
<div class="td" style="left:0px;top:431px;width:96px;height:91px">user22</div>
<div class="td" style="left:226px;top:431px;width:128px;height:91px">小来</div>
<div class="td" style="left:354px;top:431px;width:128px;height:91px">F7UpJSrry5</div>
<div class="td" style="left:482px;top:431px;width:128px;height:91px">15179202304</div>
<div class="td" style="left:610px;top:431px;width:128px;height:91px">￥0.00</div>
<div class="td" style="left:738px;top:431px;width:128px;height:91px">0</div>
<div class="td" style="left:866px;top:431px;width:128px;height:91px">小程序</div>
<div class="td" style="left:994px;top:431px;width:128px;height:91px">0</div>
<div class="td" style="left:1122px;top:431px;width:128px;height:91px">￥0.00</div>
<div class="td" style="left:1250px;top:431px;width:200px;height:91px">2024-08-29 11:26:29</div>
<div class="av" id="av5" style="top:443px"><svg width="60" height="60" viewBox="0 0 60 60"><rect width="60" height="60" fill="#fffaf6"/><path d="M28.700 17.600q1.300-.7 2.600 0l9.300 5.300q1.300.8 1.300 2.300v9.600q0 1.500-1.300 2.300l-9.300 5.300q-1.300.7-2.600 0l-9.300-5.300q-1.300-.8-1.300-2.300v-9.600q0-1.500 1.300-2.300z" fill="#fde8d3"/></svg></div>
<div class="ob" style="left:1460px;top:449px"><svg style="left:19px;top:5px" width="13" height="12"><path d="M.7 6C2.300 3.300 4.300 2 6.500 2s4.200 1.300 5.800 4c-1.600 2.700-3.600 4-5.800 4S2.300 8.700.7 6z" fill="none" stroke="#8890a4" stroke-width="1"/><circle cx="6.500" cy="6" r="2.200" fill="none" stroke="#8890a4" stroke-width="1"/></svg><span style="left:37px">查看</span></div>
<div class="ob" style="left:1550px;top:449px"><svg style="left:20px;top:5px" width="12" height="12"><path d="M9.300 6.200v3.600q0 .9-.9.900H2q-.9 0-.9-.9V3.300q0-.9.9-.9h3.700" fill="none" stroke="#8890a4" stroke-width="1"/><path d="M5 7.300l.3-1.800 4.300-4.300 1.500 1.500-4.300 4.300z" fill="none" stroke="#8890a4" stroke-width=".9"/></svg><span style="left:37px">编辑</span></div>
<div class="ob" style="left:1460px;top:481px"><svg style="left:19px;top:4px" width="11" height="13"><path d="M.5 3h10M3.700 2.800V1.400h3.600v1.400M1.800 3.200v7.600q0 .8.800.8h5.800q.8 0 .8-.8V3.200" fill="none" stroke="#8890a4" stroke-width="1"/><path d="M4.300 5.200v4.200M6.700 5.200v4.200" stroke="#8890a4" stroke-width=".9"/></svg><span style="left:39px">删除</span></div>
<div class="ob" style="left:1550px;top:481px"><span style="left:22px">更多</span><svg style="left:48px;top:9px" width="9" height="6"><path d="M.6.800h7.300l-3.650 4z" fill="#8890a4"/></svg></div>
<div class="abs" style="left:1651px;top:62px;width:8px;height:234px;border-radius:4px;background:#9ba3b6"></div>
<div class="abs" style="left:20px;top:548px;line-height:34px;color:#666">显示</div>
<div class="pg" style="left:53px;width:100px;border-radius:4px;text-align:left;padding-left:19px;color:#5a6070">10条/页<svg class="abs" style="left:81px;top:14px" width="12" height="8"><path d="M1.400 1.400l4.400 4.400 4.400-4.400" fill="none" stroke="#c0c6d2" stroke-width="1.100"/></svg></div>
<div class="abs" style="left:168px;top:548px;line-height:34px;color:#666;white-space:nowrap">当前显示1-10条，共22条记录</div>
<div class="pg" style="left:1316px;width:92px;color:#c0c6d2;line-height:32px">上一页</div>
<div class="pg" style="left:1416px;width:36px;background:#2890ff;border-color:#2890ff;color:#fff">1</div>
<div class="pg" style="left:1460px;width:36px">2</div>
<div class="pg" style="left:1504px;width:36px">3</div>
<div class="pg" style="left:1548px;width:92px;line-height:32px">下一页</div>
</div>
</div>
<div id="ft">
  <span class="abs" style="left:20px">联系地址：湖南省长沙市岳麓区绿地中央广场6栋2018室 联系电话：615981686</span>
  <span class="abs" style="right:20px">Copyright ©2017-2024 拾捌网络 版权所有<span style="display:inline-block;width:30px"></span>湘公网安备 43010402000895号 执照认证</span>
</div>
</body>
</html>
